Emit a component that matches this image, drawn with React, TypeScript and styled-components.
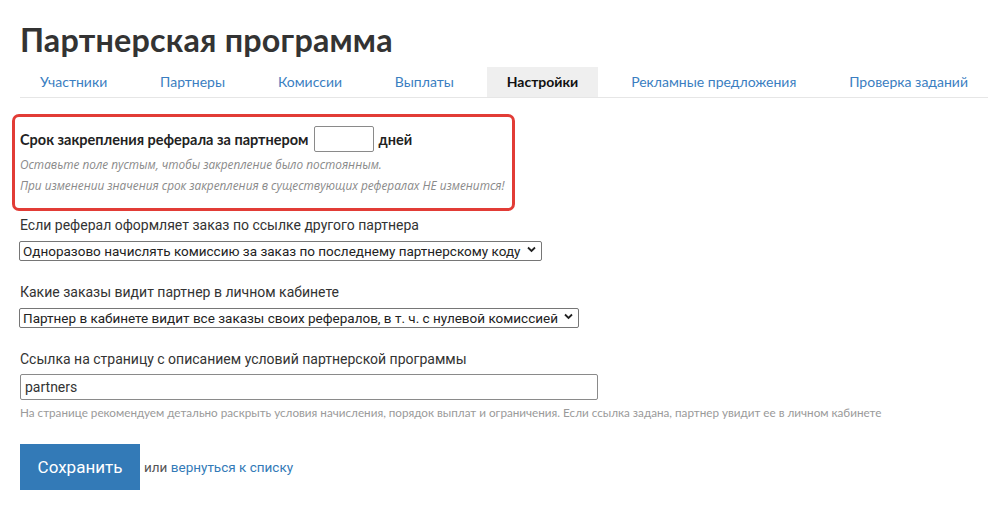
import React, { useState } from 'react'
import styled, { createGlobalStyle } from 'styled-components'

const GlobalStyle = createGlobalStyle`
  html, body {
    margin: 0;
    padding: 0;
    background: #fff;
  }
  body {
    font-family: Lato, "Noto Sans", Arial, sans-serif;
    color: #333;
  }
  * { box-sizing: border-box; }
`

const Page = styled.div`
  padding: 20px 0 0 20px;
  width: 988px;
`

const Title = styled.h1`
  margin: 0;
  font-family: Lato, "Noto Sans", sans-serif;
  font-weight: 700;
  font-size: 32.3px;
  line-height: 40px;
  color: #333;
  letter-spacing: 0.2px;
`

const Tabs = styled.ul`
  list-style: none;
  margin: 7px 0 0;
  padding: 0;
  display: flex;
  justify-content: space-between;
  border-bottom: 1px solid #e6e6e6;
`

const Tab = styled.li<{ $active?: boolean }>`
  height: 30px;
  padding: 0 20px 2px;
  display: flex;
  align-items: center;
  font-size: 14px;
  background: ${p => (p.$active ? '#efefef' : 'transparent')};
  color: ${p => (p.$active ? '#111' : '#3a7ec1')};
  font-weight: ${p => (p.$active ? 700 : 400)};
  cursor: pointer;
`

const Highlight = styled.div`
  margin: 16px 0 0 -8px;
  width: 503px;
  border: 3px solid #e23c36;
  border-radius: 7px;
  padding: 9px 5px 12px;
`

const TermRow = styled.div`
  display: flex;
  align-items: center;
  gap: 4px;
  font-weight: 700;
  font-size: 14.5px;
  color: #222;
`

const DaysInput = styled.input`
  width: 60px;
  height: 26px;
  border: 1px solid #8a8a8a;
  border-radius: 2px;
  margin: 0 1px;
  font-size: 14px;
  padding: 2px 4px;
`

const Note = styled.p`
  margin: 0;
  font-family: "Open Sans", Lato, sans-serif;
  font-style: italic;
  font-size: 11.8px;
  line-height: 21px;
  color: #8a8a8a;
  &:first-of-type { margin-top: 2px; }
`

const Field = styled.div<{ $gap?: number }>`
  margin-top: ${p => p.$gap ?? 0}px;
  display: flex;
  flex-direction: column;
  align-items: flex-start;
`

const Label = styled.label`
  font-family: Roboto, Arial, sans-serif;
  font-size: 14px;
  line-height: 20px;
  color: #333;
  margin-bottom: 5px;
`

const SelectWrap = styled.div`
  position: relative;
  display: inline-block;
  margin-left: -1px;
`

const Select = styled.select`
  appearance: none;
  -webkit-appearance: none;
  font-family: Roboto, Arial, sans-serif;
  font-size: 13.5px;
  height: 20px;
  line-height: 18px;
  color: #222;
  border: 1px solid #767676;
  border-radius: 2px;
  background: #fff;
  padding: 0 20px 0 3px;
`

const Chevron = styled.svg`
  position: absolute;
  right: 6px;
  top: 6px;
  pointer-events: none;
`

const TextInput = styled.input`
  width: 578px;
  height: 26px;
  border: 1px solid #8a8a8a;
  border-radius: 2px;
  padding: 0 4px;
  font-family: Roboto, Arial, sans-serif;
  font-size: 14px;
  color: #333;
`

const Hint = styled.div`
  margin-top: 5px;
  font-family: Lato, sans-serif;
  font-size: 11.7px;
  color: #9a9a9a;
`

const Actions = styled.div`
  margin-top: 25px;
  display: flex;
  align-items: center;
  gap: 4px;
`

const SaveButton = styled.button`
  width: 120px;
  height: 46px;
  background: #337ab7;
  border: none;
  border-radius: 0;
  color: #fff;
  font-family: Roboto, Arial, sans-serif;
  font-size: 17px;
  cursor: pointer;
`

const Or = styled.span`
  font-size: 13.5px;
  color: #555;
  font-family: Roboto, Arial, sans-serif;
`

const BackLink = styled.a`
  color: #337ab7;
  text-decoration: none;
`

const tabs = [
  'Участники',
  'Партнеры',
  'Комиссии',
  'Выплаты',
  'Настройки',
  'Рекламные предложения',
  'Проверка заданий',
]

function SelectBox({ options }: { options: string[] }) {
  return (
    <SelectWrap>
      <Select defaultValue={options[0]}>
        {options.map(o => (
          <option key={o}>{o}</option>
        ))}
      </Select>
      <Chevron width="9" height="7" viewBox="0 0 9 7">
        <path d="M1 1.5 L4.5 5 L8 1.5" fill="none" stroke="#222" strokeWidth="1.8" />
      </Chevron>
    </SelectWrap>
  )
}

export default function App() {
  const [link, setLink] = useState('partners')

  return (
    <Page>
      <GlobalStyle />
      <Title>Партнерская программа</Title>
      <Tabs>
        {tabs.map(t => (
          <Tab key={t} $active={t === 'Настройки'}>
            {t}
          </Tab>
        ))}
      </Tabs>

      <Highlight>
        <TermRow>
          Срок закрепления реферала за партнером
          <DaysInput type="text" />
          дней
        </TermRow>
        <Note>Оставьте поле пустым, чтобы закрепление было постоянным.</Note>
        <Note>При изменении значения срок закрепления в существующих рефералах НЕ изменится!</Note>
      </Highlight>

      <Field $gap={4}>
        <Label>Если реферал оформляет заказ по ссылке другого партнера</Label>
        <SelectBox
          options={[
            'Одноразово начислять комиссию за заказ по последнему партнерскому коду',
          ]}
        />
      </Field>

      <Field $gap={21}>
        <Label>Какие заказы видит партнер в личном кабинете</Label>
        <SelectBox
          options={[
            'Партнер в кабинете видит все заказы своих рефералов, в т. ч. с нулевой комиссией',
          ]}
        />
      </Field>

      <Field $gap={21}>
        <Label>Ссылка на страницу с описанием условий партнерской программы</Label>
        <TextInput value={link} onChange={e => setLink(e.target.value)} />
        <Hint>
          На странице рекомендуем детально раскрыть условия начисления, порядок выплат и ограничения. Если ссылка задана, партнер увидит ее в личном кабинете
        </Hint>
      </Field>

      <Actions>
        <SaveButton>Сохранить</SaveButton>
        <Or>
          или <BackLink href="#">вернуться к списку</BackLink>
        </Or>
      </Actions>
    </Page>
  )
}
